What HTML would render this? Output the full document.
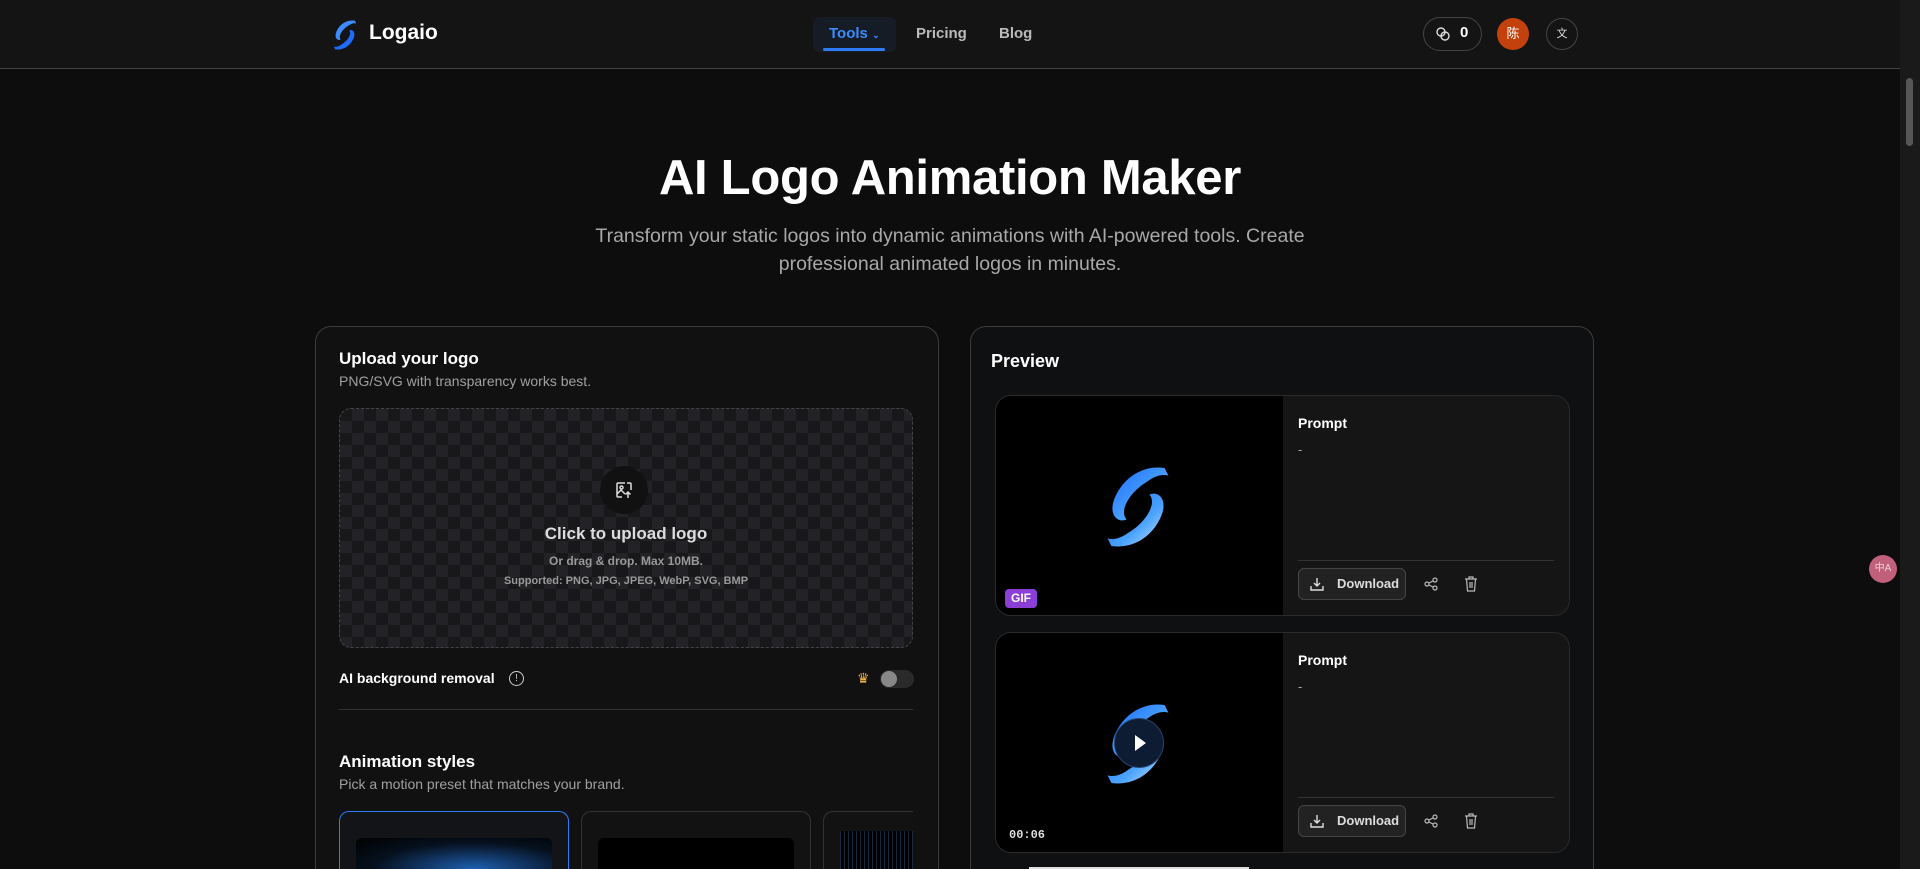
<!DOCTYPE html>
<html><head><meta charset="utf-8">
<style>
*{box-sizing:border-box;margin:0;padding:0}
html,body{width:1920px;height:869px;overflow:hidden;background:#0d0d0d}
body{font-family:"Liberation Sans","Noto Sans CJK SC",sans-serif;color:#fff}
#wrap{position:relative;width:1920px;height:869px;overflow:hidden}
.nav{position:absolute;left:0;top:0;width:1900px;height:69px;background:#141414;border-bottom:1px solid #444}
.abs{position:absolute}
.scroll{position:absolute;right:0;top:0;width:20px;height:869px;background:#1a1a1a}
.scroll div{position:absolute;left:6px;top:78px;width:7px;height:68px;background:#555;border-radius:4px}
.card{position:absolute;border:1px solid #3c3c3c;border-bottom:none;border-radius:16px 16px 0 0;background:#111}
.t17{font-size:17px;font-weight:bold}
.sub{font-size:14px;color:#a0a0a0}
.drop{position:absolute;left:339px;top:408px;width:574px;height:240px;border:1px dashed #444;border-radius:12px;
background-color:#18181b;background-image:linear-gradient(45deg,#232327 25%,transparent 25%,transparent 75%,#232327 75%),linear-gradient(45deg,#232327 25%,transparent 25%,transparent 75%,#232327 75%);background-size:24px 24px;background-position:0 0,12px 12px}
.item{position:absolute;left:995px;width:575px;height:221px;border:1px solid #2a2a2a;border-radius:16px;background:#151515;overflow:hidden}
.item .img{position:absolute;left:0;top:0;width:287px;height:100%;background:#000}
.btn{position:absolute;left:302px;width:108px;height:32px;border:1px solid #444;border-radius:6px;background:#222;font-size:13px;font-weight:bold;color:#ddd;line-height:30px;padding-left:38px}
</style></head><body><div id="wrap">
<svg width="0" height="0" style="position:absolute"><defs><linearGradient id="g1" x1="0" y1="0" x2="1" y2="1"><stop offset="0" stop-color="#1e6bff"/><stop offset=".6" stop-color="#4aa3ff"/><stop offset="1" stop-color="#c8e2ff"/></linearGradient></defs></svg>
<div class="nav">
  <svg class="abs" style="left:331px;top:19px" width="28" height="32" viewBox="0 0 80 90"><path d="M68 4 C40 0 20 20 14 40 C10 55 20 62 28 58 C20 50 30 30 50 18 C58 12 66 10 72 12Z" fill="#3b8cff"/><path d="M12 86 C40 90 60 70 66 50 C70 35 60 28 52 32 C60 40 50 60 30 72 C22 78 14 80 8 78Z" fill="#1f6bff"/></svg>
  <div class="abs" style="left:369px;top:21px;font-size:21px;font-weight:bold">Logaio</div>
  <div class="abs" style="left:813px;top:17px;width:83px;height:35px;background:#161c26;border-radius:6px"></div>
  <div class="abs" style="left:829px;top:25px;font-size:15px;color:#3b8cff;font-weight:bold">Tools <span style="font-size:9px">⌄</span></div>
  <div class="abs" style="left:823px;top:48px;width:62px;height:3px;background:#2f7cf6;border-radius:2px"></div>
  <div class="abs" style="left:916px;top:25px;font-size:15px;color:#bbb;font-weight:bold">Pricing</div>
  <div class="abs" style="left:999px;top:25px;font-size:15px;color:#bbb;font-weight:bold">Blog</div>
  <div class="abs" style="left:1423px;top:17px;width:59px;height:34px;border:1px solid #444;border-radius:17px"></div>
  <svg class="abs" style="left:1435px;top:26px" width="16" height="16" viewBox="0 0 16 16" fill="none" stroke="#ddd" stroke-width="1.4"><circle cx="6" cy="6" r="4"/><circle cx="10" cy="10" r="4"/></svg>
  <div class="abs" style="left:1460px;top:24px;font-size:15px;font-weight:bold">0</div>
  <div class="abs" style="left:1497px;top:18px;width:32px;height:32px;border-radius:50%;background:#c2410c;text-align:center;line-height:32px;font-size:13px">陈</div>
  <div class="abs" style="left:1546px;top:18px;width:32px;height:32px;border-radius:50%;border:1px solid #444;text-align:center;line-height:30px;font-size:11px;color:#ddd">文</div>
</div>
<div class="scroll"><div></div></div>

<div class="abs" style="left:0;width:1900px;top:150px;text-align:center;font-size:49px;font-weight:bold;letter-spacing:-0.3px">AI Logo Animation Maker</div>
<div class="abs" style="left:570px;width:760px;top:222px;text-align:center;font-size:19.5px;line-height:28px;color:#a8a8a8">Transform your static logos into dynamic animations with AI-powered tools. Create professional animated logos in minutes.</div>

<div class="card" style="left:315px;top:326px;width:624px;height:543px"></div>
<div class="abs t17" style="left:339px;top:349px">Upload your logo</div>
<div class="abs sub" style="left:339px;top:373px">PNG/SVG with transparency works best.</div>
<div class="drop"></div>
<div class="abs" style="left:600px;top:466px;width:48px;height:48px;border-radius:50%;background:#111"></div>
<svg class="abs" style="left:614px;top:480px" width="20" height="20" viewBox="0 0 20 20" fill="none" stroke="#ddd" stroke-width="1.5"><path d="M11 3H4a1 1 0 0 0-1 1v12a1 1 0 0 0 1 1h4M17 10V4a1 1 0 0 0-1-1h-3"/><circle cx="7.5" cy="7.5" r="1.5"/><path d="M3 14l4-4 4 4M14 18v-6M11.5 14.5 14 12l2.5 2.5"/></svg>
<div class="abs" style="left:339px;width:574px;top:524px;text-align:center;font-size:17px;font-weight:bold;color:#ddd">Click to upload logo</div>
<div class="abs" style="left:339px;width:574px;top:554px;text-align:center;font-size:12px;font-weight:bold;color:#999">Or drag &amp; drop. Max 10MB.</div>
<div class="abs" style="left:339px;width:574px;top:575px;text-align:center;font-size:11px;font-weight:bold;color:#999">Supported: PNG, JPG, JPEG, WebP, SVG, BMP</div>
<div class="abs" style="left:339px;top:670px;font-size:14px;font-weight:bold">AI background removal</div>
<div class="abs" style="left:509px;top:671px;width:15px;height:15px;border:1.3px solid #ccc;border-radius:50%;font-size:10px;text-align:center;line-height:13px;color:#ccc">!</div>
<div class="abs" style="left:857px;top:670px;font-size:14px;color:#f5b942">♛</div>
<div class="abs" style="left:880px;top:670px;width:34px;height:18px;border-radius:9px;background:#2a2a2a"></div>
<div class="abs" style="left:881px;top:671px;width:16px;height:16px;border-radius:50%;background:#888"></div>
<div class="abs" style="left:339px;top:709px;width:574px;height:1px;background:#333"></div>
<div class="abs t17" style="left:339px;top:752px">Animation styles</div>
<div class="abs sub" style="left:339px;top:776px">Pick a motion preset that matches your brand.</div>
<div class="abs" style="left:339px;top:811px;width:230px;height:58px;border:1.5px solid #2f7cf6;border-bottom:none;border-radius:10px 10px 0 0;background:#121418"></div>
<div class="abs" style="left:356px;top:838px;width:196px;height:31px;border-radius:6px 6px 0 0;background:radial-gradient(ellipse at 60% 100%,#1d5fb0,#06101e 60%,#000)"></div>
<div class="abs" style="left:581px;top:811px;width:230px;height:58px;border:1px solid #333;border-bottom:none;border-radius:10px 10px 0 0;background:#121212"></div>
<div class="abs" style="left:598px;top:838px;width:196px;height:31px;border-radius:6px 6px 0 0;background:#000"></div>
<div class="abs" style="left:823px;top:811px;width:90px;height:58px;border:1px solid #333;border-right:none;border-bottom:none;border-radius:10px 0 0 0;background:#121212"></div>
<div class="abs" style="left:840px;top:831px;width:73px;height:38px;background:repeating-linear-gradient(90deg,#1a2a3a 0 1px,#000 1px 4px)"></div>

<div class="card" style="left:970px;top:326px;width:624px;height:543px;background:#0f1012"></div>
<div class="abs" style="left:991px;top:351px;font-size:18px;font-weight:bold">Preview</div>

<div class="item" style="top:395px">
  <div class="img">
    <svg class="abs" style="left:104px;top:68px" width="76" height="86" viewBox="0 0 80 90"><path d="M68 4 C40 0 20 20 14 40 C10 55 20 62 28 58 C20 50 30 30 50 18 C58 12 66 10 72 12Z" fill="url(#g1)"/><path d="M12 86 C40 90 60 70 66 50 C70 35 60 28 52 32 C60 40 50 60 30 72 C22 78 14 80 8 78Z" fill="url(#g1)"/></svg>
    <div class="abs" style="left:9px;top:193px;width:32px;height:19px;background:#8b3fd6;border-radius:4px;font-size:12px;font-weight:bold;text-align:center;line-height:19px">GIF</div>
  </div>
  <div class="abs" style="left:302px;top:19px;font-size:14px;font-weight:bold">Prompt</div>
  <div class="abs" style="left:302px;top:46px;font-size:13px;color:#aaa">-</div>
  <div class="abs" style="left:302px;top:164px;width:256px;height:1px;background:#333"></div>
  <div class="btn" style="top:172px">Download</div>
  <svg class="abs" style="left:314px;top:181px" width="14" height="14" viewBox="0 0 14 14" fill="none" stroke="#ddd" stroke-width="1.4"><path d="M7 1v8M4 6l3 3 3-3M1 9v4h12V9"/></svg>
  <svg class="abs" style="left:428px;top:181px" width="14" height="14" viewBox="0 0 14 14" fill="none" stroke="#bbb" stroke-width="1.2"><circle cx="11" cy="3" r="2"/><circle cx="3" cy="7" r="2"/><circle cx="11" cy="11" r="2"/><path d="M5 6l4-2M5 8l4 2"/></svg>
  <svg class="abs" style="left:468px;top:180px" width="14" height="16" viewBox="0 0 14 16" fill="none" stroke="#bbb" stroke-width="1.2"><path d="M1 3h12M5 3V1h4v2M2.5 3l1 12h7l1-12M6 6v6M8 6v6"/></svg>
</div>

<div class="item" style="top:632px">
  <div class="img">
    <svg class="abs" style="left:104px;top:68px" width="76" height="86" viewBox="0 0 80 90"><path d="M68 4 C40 0 20 20 14 40 C10 55 20 62 28 58 C20 50 30 30 50 18 C58 12 66 10 72 12Z" fill="url(#g1)"/><path d="M12 86 C40 90 60 70 66 50 C70 35 60 28 52 32 C60 40 50 60 30 72 C22 78 14 80 8 78Z" fill="url(#g1)"/></svg>
    <div class="abs" style="left:118px;top:85px;width:50px;height:50px;border-radius:50%;background:#0d1c33;border:1px solid #27456e"></div>
    <div class="abs" style="left:139px;top:102px;width:0;height:0;border-left:11px solid #fff;border-top:8px solid transparent;border-bottom:8px solid transparent"></div>
    <div class="abs" style="left:13px;top:195px;font-family:'Liberation Mono',monospace;font-size:12px;font-weight:bold;color:#ddd">00:06</div>
  </div>
  <div class="abs" style="left:302px;top:19px;font-size:14px;font-weight:bold">Prompt</div>
  <div class="abs" style="left:302px;top:46px;font-size:13px;color:#aaa">-</div>
  <div class="abs" style="left:302px;top:164px;width:256px;height:1px;background:#333"></div>
  <div class="btn" style="top:172px">Download</div>
  <svg class="abs" style="left:314px;top:181px" width="14" height="14" viewBox="0 0 14 14" fill="none" stroke="#ddd" stroke-width="1.4"><path d="M7 1v8M4 6l3 3 3-3M1 9v4h12V9"/></svg>
  <svg class="abs" style="left:428px;top:181px" width="14" height="14" viewBox="0 0 14 14" fill="none" stroke="#bbb" stroke-width="1.2"><circle cx="11" cy="3" r="2"/><circle cx="3" cy="7" r="2"/><circle cx="11" cy="11" r="2"/><path d="M5 6l4-2M5 8l4 2"/></svg>
  <svg class="abs" style="left:468px;top:180px" width="14" height="16" viewBox="0 0 14 16" fill="none" stroke="#bbb" stroke-width="1.2"><path d="M1 3h12M5 3V1h4v2M2.5 3l1 12h7l1-12M6 6v6M8 6v6"/></svg>
</div>
<div class="abs" style="left:1029px;top:867px;width:220px;height:2px;background:#ddd"></div>

<div class="abs" style="left:1869px;top:555px;width:28px;height:28px;border-radius:50%;background:#c0607a;font-size:10px;text-align:center;line-height:28px;color:#f3d0da">中A</div>
</div></body></html>
